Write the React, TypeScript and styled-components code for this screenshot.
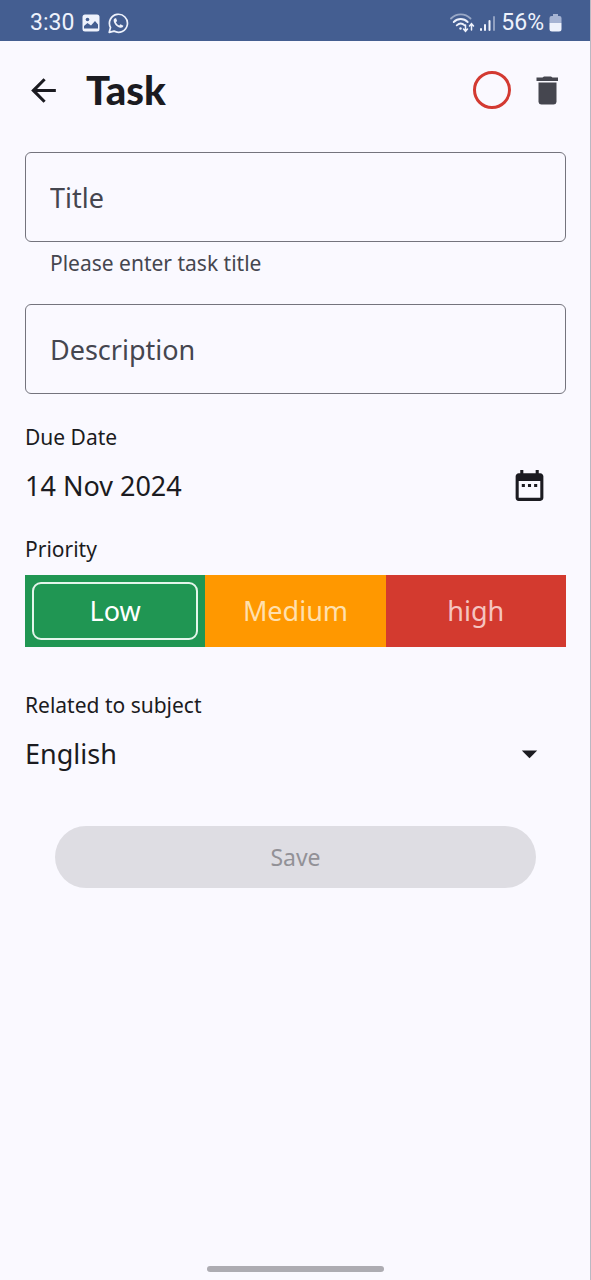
import React, { useState } from 'react';
import styled, { createGlobalStyle } from 'styled-components';
import { MdArrowBack, MdArrowDropDown, MdDateRange } from 'react-icons/md';

const GlobalStyle = createGlobalStyle`
  * { box-sizing: border-box; }
  body { margin: 0; background: #faf9ff; }
  button, input, select { font: inherit; color: inherit; }
`;

const Page = styled.div`
  min-height: 100vh;
  display: flex;
  flex-direction: column;
  background: #faf9ff;
  border-right: 1px solid #b9b9c3;
  color: #1b1b21;
  font-family: 'Noto Sans', 'Open Sans', sans-serif;
`;

const StatusBar = styled.div`
  height: 41px;
  padding: 5px 28px 0 30px;
  display: flex;
  align-items: center;
  justify-content: space-between;
  background: #445e91;
  color: #eef2fc;
  font: 400 23px/36px Roboto, sans-serif;
`;

const StatusGroup = styled.div<{ $gap: number }>`
  display: flex;
  align-items: center;
  gap: ${(p) => p.$gap}px;
`;

const AppBar = styled.header`
  height: 98px;
  padding: 0 24px 0 25px;
  display: flex;
  align-items: center;
`;

const Heading = styled.h1`
  flex: 1;
  margin: 0 0 0 24px;
  font: 900 40px/48px Lato, sans-serif;
`;

const IconButton = styled.button<{ $tint?: string }>`
  padding: 0;
  border: 0;
  background: none;
  display: flex;
  color: ${(p) => p.$tint ?? '#1b1b21'};
  cursor: pointer;
`;

const DoneToggle = styled.input`
  appearance: none;
  width: 38px;
  height: 38px;
  margin: 0 18px 0 0;
  border: 3px solid #d33a32;
  border-radius: 50%;
  cursor: pointer;
  &:checked { background: #d33a32; }
`;

const Form = styled.form`
  padding: 13px 24px 0 25px;
  display: flex;
  flex-direction: column;
`;

const OutlinedInput = styled.input`
  width: 100%;
  height: 90px;
  padding: 0 24px;
  border: 1px solid #74747d;
  border-radius: 6px;
  background: transparent;
  font-size: 27px;
  &::placeholder { color: #45464f; opacity: 1; }
`;

const HelperText = styled.p`
  margin: 8px 25px 28px;
  color: #45464f;
  font-size: 21px;
  line-height: 26px;
`;

const FieldLabel = styled.label<{ $top: number }>`
  margin-top: ${(p) => p.$top}px;
  font-size: 21px;
  line-height: 26px;
`;

const ValueRow = styled.div`
  height: 48px;
  margin-top: 11px;
  padding-right: 18px;
  display: flex;
  align-items: center;
`;

const DateInput = styled.input`
  flex: 1;
  min-width: 0;
  padding: 0;
  border: 0;
  background: none;
  font-size: 27px;
`;

const SelectWrap = styled.div`
  margin-top: 11px;
  display: grid;
  align-items: center;
  & > * { grid-area: 1 / 1; }
  & > svg { justify-self: end; margin-right: 18px; pointer-events: none; }
`;

const SubjectSelect = styled.select`
  appearance: none;
  width: 100%;
  height: 48px;
  padding: 0;
  border: 0;
  background: none;
  font-size: 27px;
`;

const PriorityGroup = styled.fieldset`
  min-width: 0;
  margin: 27px 0 0;
  padding: 0;
  border: 0;
`;

const PriorityLegend = styled.legend`
  padding: 0;
  margin-bottom: 13px;
  font-size: 21px;
  line-height: 26px;
`;

const Segments = styled.div`
  height: 72px;
  display: grid;
  grid-template-columns: repeat(3, 1fr);
`;

const Segment = styled.label<{ $fill: string; $text: string }>`
  padding: 7px;
  display: grid;
  background: ${(p) => p.$fill};
  color: ${(p) => p.$text};
  cursor: pointer;
  & > * { grid-area: 1 / 1; }
`;

const SegmentRadio = styled.input`
  appearance: none;
  margin: 0;
  border-radius: 9px;
  &:checked { border: 2px solid #e4f5eb; }
  &:checked + span { color: #ffffff; }
`;

const SegmentText = styled.span`
  place-self: center;
  font-size: 27px;
  line-height: 36px;
`;

const SaveButton = styled.button`
  height: 62px;
  margin: 49px 30px 0;
  border: 0;
  border-radius: 31px;
  background: #dedde3;
  color: #929197;
  font-size: 23px;
`;

const HomeIndicator = styled.div`
  width: 30%;
  height: 6px;
  margin: auto auto 8px;
  border-radius: 3px;
  background: #adacb2;
`;

const PictureIcon = () => (
  <svg width="18" height="18" viewBox="0 0 18 18" aria-hidden="true">
    <rect x="0.5" y="0.5" width="17" height="17" rx="2.5" fill="#eef2fc" />
    <circle cx="5.5" cy="5.5" r="1.8" fill="#445e91" />
    <path d="M2 14.500V12l3.500-3 3.500 2.500L13 7l3 3.500v4z" fill="#445e91" />
  </svg>
);

const ChatIcon = () => (
  <svg width="21" height="21" viewBox="0 0 21 21" fill="none" aria-hidden="true">
    <path d="M1.200 19.400l1.300-4.900A9 9 0 1 1 6 18.100z" stroke="#eef2fc" strokeWidth="1.700" strokeLinejoin="round" />
    <path d="M7 5.200c-.9.5-1.500 1.500-1.300 2.700.5 3.300 3.600 6.200 6.800 6.800 1.400.2 2.700-.6 2.900-1.900l-2.900-1.600-1.200 1.300c-1.700-.7-2.700-1.700-3.400-3.300l1.200-1.200-1-2.800z" fill="#eef2fc" />
  </svg>
);

const WifiIcon = () => (
  <svg width="25" height="20" viewBox="0 0 25 20" fill="none" stroke="#eef2fc" strokeWidth="1.8" strokeLinecap="round" aria-hidden="true">
    <path d="M1 5.500C6.500 0 15 0 20.500 5.500" opacity=".5" />
    <path d="M3.700 9c4-4 10-4 14 0M6.700 12.300c2.500-2.300 5.500-2.300 8 0" />
    <circle cx="10.500" cy="15.500" r="1.200" fill="#eef2fc" stroke="none" />
    <path d="M15.500 12v6m-2-2l2 2.300 2-2.300M21.500 17v-6m-2 2l2-2.300 2 2.300" strokeWidth="1.500" />
  </svg>
);

const SignalIcon = () => (
  <svg width="16" height="17" viewBox="0 0 16 17" fill="#eef2fc" aria-hidden="true">
    <rect x="0" y="13" width="2" height="3" rx="1" />
    <rect x="4" y="9" width="2" height="7" rx="1" />
    <rect x="8.500" y="5" width="2" height="11" rx="1" />
    <rect x="13" y="1" width="2" height="15" rx="1" opacity=".45" />
  </svg>
);

const BatteryIcon = () => (
  <svg width="13" height="18" viewBox="0 0 13 18" aria-hidden="true">
    <path d="M4 0h5v2h1.500A2 2 0 0 1 12.500 4v5h-12V4a2 2 0 0 1 2-2H4z" fill="#a5b3d3" />
    <path d="M.5 9h12v6a2.500 2.500 0 0 1-2.500 2.500H3A2.500 2.500 0 0 1 .5 15z" fill="#eef2fc" />
  </svg>
);

const TrashIcon = () => (
  <svg width="37" height="37" viewBox="0 0 37 37" fill="currentColor" aria-hidden="true">
    <path d="M13.500 5.500l1.500-1h7l1.500 1H29V9H7.500V5.500z" />
    <path d="M9.500 10.500h18V30a3 3 0 0 1-3 2.500h-12A3 3 0 0 1 9.500 30z" />
  </svg>
);

const priorities = [
  { value: 'Low', fill: '#209653', text: '#bfe3cd' },
  { value: 'Medium', fill: '#ff9800', text: '#ffe0ae' },
  { value: 'high', fill: '#d33a2f', text: '#f5c4c0' },
];

export default function App() {
  const [priority, setPriority] = useState('Low');
  const [title, setTitle] = useState('');

  return (
    <Page>
      <GlobalStyle />
      <StatusBar>
        <StatusGroup $gap={8}>
          <span>3:30</span>
          <PictureIcon />
          <ChatIcon />
        </StatusGroup>
        <StatusGroup $gap={5}>
          <WifiIcon />
          <SignalIcon />
          <span>56%</span>
          <BatteryIcon />
        </StatusGroup>
      </StatusBar>

      <AppBar>
        <IconButton type="button" aria-label="Back">
          <MdArrowBack size={37} />
        </IconButton>
        <Heading>Task</Heading>
        <DoneToggle type="checkbox" aria-label="Mark task complete" />
        <IconButton type="button" aria-label="Delete task" $tint="#45464f">
          <TrashIcon />
        </IconButton>
      </AppBar>

      <Form onSubmit={(e: React.FormEvent) => e.preventDefault()}>
        <OutlinedInput
          aria-label="Title"
          aria-describedby="title-help"
          placeholder="Title"
          value={title}
          onChange={(e) => setTitle(e.target.value)}
        />
        <HelperText id="title-help">Please enter task title</HelperText>
        <OutlinedInput aria-label="Description" placeholder="Description" />

        <FieldLabel htmlFor="due" $top={30}>Due Date</FieldLabel>
        <ValueRow>
          <DateInput id="due" readOnly value="14 Nov 2024" />
          <IconButton type="button" aria-label="Choose due date">
            <MdDateRange size={37} />
          </IconButton>
        </ValueRow>

        <PriorityGroup>
          <PriorityLegend>Priority</PriorityLegend>
          <Segments>
            {priorities.map((p) => (
              <Segment key={p.value} $fill={p.fill} $text={p.text}>
                <SegmentRadio
                  type="radio"
                  name="priority"
                  value={p.value}
                  checked={priority === p.value}
                  onChange={() => setPriority(p.value)}
                />
                <SegmentText>{p.value}</SegmentText>
              </Segment>
            ))}
          </Segments>
        </PriorityGroup>

        <FieldLabel htmlFor="subject" $top={45}>Related to subject</FieldLabel>
        <SelectWrap>
          <SubjectSelect id="subject" defaultValue="English">
            <option>English</option>
          </SubjectSelect>
          <MdArrowDropDown size={37} aria-hidden="true" />
        </SelectWrap>

        <SaveButton type="submit" disabled={!title}>Save</SaveButton>
      </Form>

      <HomeIndicator />
    </Page>
  );
}
